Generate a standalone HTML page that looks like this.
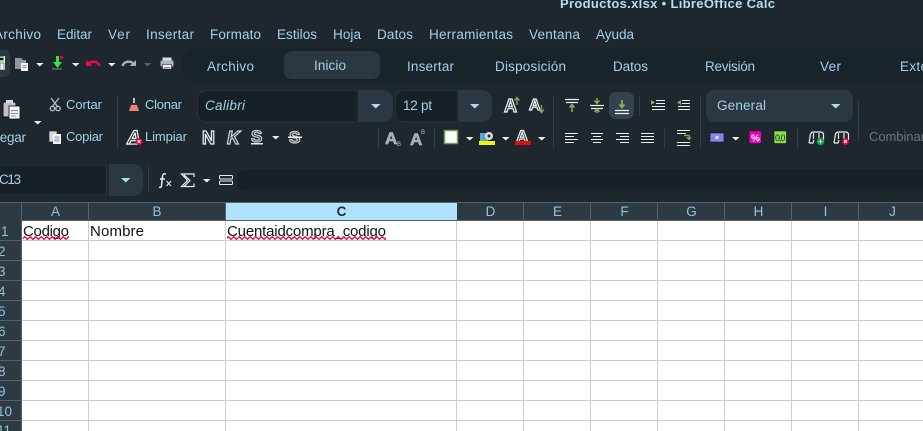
<!DOCTYPE html>
<html><head><meta charset="utf-8">
<style>
html,body{margin:0;padding:0;background:#1e272e;overflow:hidden;width:923px;height:431px}
svg{display:block}
text{font-family:"Liberation Sans",sans-serif;font-size:13.5px;fill:#9fd2ea}
.l{font-size:13px}
.g{font-size:15px;fill:#111}
.h{font-size:13.5px;fill:#8fc3dc;text-anchor:middle}
.r{font-size:13.5px;fill:#8fc3dc}
.o{font-weight:bold;fill:#2a343a;stroke:#f0f0f0;stroke-width:1.200px}
</style></head><body>
<svg width="923" height="431" viewBox="0 0 923 431" xmlns="http://www.w3.org/2000/svg">
<defs>
<path id="t" d="M0 0h7.5l-3.75 3.5z" fill="#f0f0f0"/>
<path id="b" d="M0 0h9.5l-4.75 4.5z" fill="#a8def5"/>
<pattern id="w" x="0" y="235" width="5.500" height="6" patternUnits="userSpaceOnUse"><path d="M-2.750 1.700L0 4.300 2.750 1.700 5.500 4.300 8.250 1.700" fill="none" stroke="#f0003c" stroke-width="1.300"/></pattern>
</defs>
<rect width="923" height="431" fill="#1e272e"/>
<!-- title -->
<text x="560" y="8" textLength="215" lengthAdjust="spacing" font-weight="bold" style="font-size:13px;fill:#b4dff2">Productos.xlsx • LibreOffice Calc</text>
<!-- menu -->
<text x="-6" y="39" textLength="47" lengthAdjust="spacing">Archivo</text>
<text x="57" y="39" textLength="35" lengthAdjust="spacing">Editar</text>
<text x="108" y="39" textLength="22" lengthAdjust="spacing">Ver</text>
<text x="146" y="39" textLength="48" lengthAdjust="spacing">Insertar</text>
<text x="210" y="39" textLength="51" lengthAdjust="spacing">Formato</text>
<text x="277" y="39" textLength="40" lengthAdjust="spacing">Estilos</text>
<text x="333" y="39" textLength="28" lengthAdjust="spacing">Hoja</text>
<text x="377" y="39" textLength="36" lengthAdjust="spacing">Datos</text>
<text x="429" y="39" textLength="84" lengthAdjust="spacing">Herramientas</text>
<text x="529" y="39" textLength="51" lengthAdjust="spacing">Ventana</text>
<text x="596" y="39" textLength="38" lengthAdjust="spacing">Ayuda</text>
<!-- tab strip -->
<rect x="183" y="48" width="760" height="34" rx="10" fill="#19232a"/>
<rect x="284" y="51" width="96" height="28" rx="8" fill="#2b3841"/>
<text x="207" y="71" textLength="47" lengthAdjust="spacing">Archivo</text>
<text x="314" y="70" textLength="32" lengthAdjust="spacing">Inicio</text>
<text x="407" y="71" textLength="47" lengthAdjust="spacing">Insertar</text>
<text x="495" y="71" textLength="71" lengthAdjust="spacing">Disposición</text>
<text x="613" y="71" textLength="35" lengthAdjust="spacing">Datos</text>
<text x="705" y="71" textLength="50" lengthAdjust="spacing">Revisión</text>
<text x="820" y="71" textLength="21" lengthAdjust="spacing">Ver</text>
<text x="900" y="71" textLength="62" lengthAdjust="spacing">Extensión</text>
<!-- quick access -->
<rect x="-10" y="50" width="20" height="27" rx="6" fill="#2b3841"/>
<rect x="-2" y="56" width="7" height="14" fill="#f4f4f4"/><rect x="-1" y="56" width="5" height="1.500" fill="#35b44a"/><rect x="0" y="58" width="3.500" height="2" fill="#111"/><rect x="-1" y="60.500" width="5" height="1" fill="#35b44a"/><rect x="0" y="63" width="4" height="7" fill="#f4f4f4" stroke="#222" stroke-width=".5"/>
<path d="M15 58h6l2 2h3v9H15z" fill="#8f9699"/><rect x="21" y="63" width="7" height="8" fill="#f2f2f2"/><path d="M22.5 65.500h4M22.500 67.500h4" stroke="#8d80e8"/>
<use href="#t" x="36" y="63"/>
<path d="M56 56h3v6h3l-4.500 6-4.500-6h3z" fill="#3ee04a"/><rect x="52" y="68.500" width="10" height="1" fill="#888"/><circle cx="61.500" cy="57.500" r="1.800" fill="#e4003a"/>
<use href="#t" x="72" y="63"/>
<path d="M99.500 66C98 61.500 93 60.500 89 63" fill="none" stroke="#ee0a44" stroke-width="2.400"/><path d="M86 60v6h6.500z" fill="#ee0a44"/>
<use href="#t" x="108" y="63"/>
<path d="M122.500 66C124 61.500 129 60.500 133 63" fill="none" stroke="#aab0b3" stroke-width="2.400"/><path d="M136 60v6h-6.500z" fill="#aab0b3"/>
<path d="M144 63h7.500l-3.750 3.500z" fill="#5d6468"/>
<rect x="162.500" y="57.500" width="9" height="4" fill="#ddd"/><rect x="160.500" y="60.500" width="13" height="6" rx="1" fill="#aeb4b7"/><rect x="162.500" y="64.500" width="9" height="4.500" fill="#f4f4f4" stroke="#111" stroke-width=".5"/><path d="M164 67.500h6" stroke="#7a70e0"/>
<!-- clipboard group -->
<rect x="3" y="102" width="13" height="15" rx="1.500" fill="#bfc3c5" stroke="#111"/><rect x="6" y="100" width="7" height="3" fill="#d8d8d8"/>
<rect x="9" y="106" width="11" height="13" fill="#f6f6f6" stroke="#111" stroke-width=".8"/><path d="M11 110.500h7M11 113.500h7M11 116h5" stroke="#8d80e8"/>
<text x="-9" y="142" textLength="35" lengthAdjust="spacing">Pegar</text>
<use href="#t" x="34" y="121"/>
<g stroke="#b9bdbc" stroke-width="1.300" fill="none"><path d="M51 98l7 9M59 98l-7 9"/><circle cx="52.500" cy="108.500" r="2.200"/><circle cx="58" cy="108.500" r="2.200"/></g>
<text class="l" x="66" y="109" textLength="36" lengthAdjust="spacing">Cortar</text>
<rect x="49" y="131" width="8" height="11" fill="#d5d5d5" stroke="#222" stroke-width=".6"/><rect x="53" y="134" width="8" height="10" fill="#f6f6f6"/><path d="M54.500 137h5M54.500 139h5M54.500 141h5" stroke="#8d80e8"/>
<text class="l" x="66" y="141" textLength="37" lengthAdjust="spacing">Copiar</text>
<rect x="117" y="96" width="1" height="52" fill="#313d45"/>
<rect x="133" y="98" width="2" height="6" fill="#bbb"/><rect x="131" y="103" width="6" height="2" fill="#333"/><path d="M131 105h6l2 6h-10z" fill="#f47d74"/>
<text class="l" x="145" y="109" textLength="37" lengthAdjust="spacing">Clonar</text>
<text x="127" y="144" class="o" font-style="italic" style="font-size:19px" textLength="14">A</text><rect x="127" y="143.500" width="12" height="1.200" fill="#eee"/><circle cx="139" cy="141.500" r="3.500" fill="#e4003a"/><path d="M137.500 140l3 3M140.500 140l-3 3" stroke="#fff"/>
<text class="l" x="145" y="141" textLength="42" lengthAdjust="spacing">Limpiar</text>
<!-- bold etc -->
<text x="202" y="144" class="o" style="font-size:18px" textLength="14">N</text>
<text x="227" y="144" class="o" font-style="italic" style="font-size:18px;stroke:#d0d0d0" textLength="14">K</text>
<text x="251" y="142" class="o" style="font-size:17px;stroke:#d0d0d0" textLength="12">S</text>
<rect x="251" y="143" width="12" height="1.500" fill="#eee"/>
<use href="#t" x="272" y="136"/>
<text x="289" y="143" class="o" style="font-size:17px;stroke:#d0d0d0" textLength="12">S</text>
<rect x="288" y="136.500" width="14" height="1.500" fill="#eee"/>
<!-- font box -->
<rect x="197.500" y="90.500" width="170" height="31.500" rx="8" fill="#172025" stroke="#28343b"/>
<path d="M358 90h25a10 10 0 0 1 10 10v12a10 10 0 0 1-10 10h-25z" fill="#2b3841"/>
<rect x="356.500" y="90" width="1.500" height="32" fill="#1e272e"/>
<use href="#b" x="371" y="104"/>
<text x="205" y="110" font-style="italic" textLength="40" lengthAdjust="spacing">Calibri</text>
<rect x="395.500" y="90.500" width="70" height="31.500" rx="8" fill="#172025" stroke="#28343b"/>
<path d="M458 90h24a10 10 0 0 1 10 10v12a10 10 0 0 1-10 10h-24z" fill="#2b3841"/>
<rect x="456" y="90" width="2" height="32" fill="#1e272e"/>
<use href="#b" x="470" y="104"/>
<text x="403" y="110" textLength="29" lengthAdjust="spacing">12 pt</text>
<!-- grow/shrink -->
<text x="504" y="112" class="o" style="font-size:18px" textLength="13">A</text>
<path d="M517 105v-7M514.500 100.500l2.500-3 2.500 3" stroke="#7fb05a" stroke-width="1.300" fill="none"/>
<text x="529" y="110" class="o" style="font-size:16px" textLength="11">A</text>
<path d="M541.500 105v7M539 109.500l2.500 3 2.500-3" stroke="#7fb05a" stroke-width="1.300" fill="none"/>
<rect x="553" y="96" width="1" height="52" fill="#313d45"/>
<!-- valign -->
<path d="M565 99.500h14M566 102.500h12" stroke="#eee" stroke-width="1.200"/><path d="M572 112v-7M569.500 107.500l2.500-3 2.500 3" stroke="#7fb05a" stroke-width="1.600" fill="none"/>
<path d="M590 105.500h14M591 108.500h12" stroke="#eee" stroke-width="1.200"/><path d="M597 98v5M594.500 100.500l2.500 3 2.500-3M597 113v-3M594.500 112l2.500-3 2.500 3" stroke="#7fb05a" stroke-width="1.400" fill="none"/>
<rect x="609" y="92" width="25" height="27" rx="7" fill="#33434c"/>
<path d="M615 110.500h14M615 113.500h14" stroke="#eee" stroke-width="1.200"/><path d="M622 100v7M619.500 104.500l2.500 3 2.500-3" stroke="#7fb05a" stroke-width="1.800" fill="none"/>
<rect x="639" y="96" width="1" height="20" fill="#313d45"/>
<path d="M651 100l4 2.500-4 2.500z" fill="#7fb05a"/><path d="M656 100.500h9M656 103.500h9M652 106.500h13M652 109.500h13" stroke="#eee"/>
<path d="M681 100l-4 2.500 4 2.500z" fill="#7fb05a"/><path d="M682 100.500h8M682 103.500h8M678 106.500h12M678 109.500h12" stroke="#eee"/>
<rect x="700" y="96" width="1" height="52" fill="#313d45"/>
<rect x="706" y="90" width="147" height="32" rx="8" fill="#2b3841"/>
<text x="717" y="110" textLength="49" lengthAdjust="spacing">General</text>
<use href="#b" x="831" y="104"/>
<rect x="858" y="101" width="1" height="41" fill="#313d45"/>
<!-- row 2 -->
<rect x="378" y="128" width="1" height="20" fill="#313d45"/>
<text x="385" y="144" font-weight="bold" style="font-size:17px;fill:#aaa;stroke:#bbb;stroke-width:.6px" textLength="12">A</text>
<text x="397" y="146" style="font-size:6px;fill:#bbb">B</text>
<text x="410" y="145" font-weight="bold" style="font-size:17px;fill:#aaa;stroke:#bbb;stroke-width:.6px" textLength="12">A</text>
<text x="421" y="134" style="font-size:6px;fill:#bbb">B</text>
<rect x="434" y="128" width="1" height="20" fill="#313d45"/>
<rect x="444.500" y="130.500" width="13" height="13" fill="#fff" stroke="#6fa050" stroke-width="1.500"/>
<use href="#t" x="466" y="137"/>
<rect x="480" y="133" width="8" height="8" fill="#5ea6c8"/><circle cx="489" cy="136" r="4" fill="#ddd"/><circle cx="489" cy="136" r="1.500" fill="#222"/>
<rect x="479" y="141" width="16" height="4" fill="#f2f20a"/>
<use href="#t" x="502" y="137"/>
<text x="516" y="142" class="o" style="font-size:17px" textLength="14">A</text>
<rect x="515" y="141" width="16" height="4" fill="#e30a0a"/>
<use href="#t" x="538" y="137"/>
<path d="M565 133.500h13M565 136.500h9M565 139.500h13M565 142.500h9" stroke="#eee"/>
<path d="M591 133.500h12M593 136.500h8M591 139.500h12M593 142.500h8" stroke="#eee"/>
<path d="M616 133.500h13M620 136.500h9M616 139.500h13M620 142.500h9" stroke="#eee"/>
<path d="M641 133.500h13M641 136.500h13M641 139.500h13M641 142.500h13" stroke="#eee"/>
<rect x="664" y="128" width="1" height="20" fill="#313d45"/>
<path d="M677 130.500h13M677 133.500h9M677 142.500h13M677 145.500h13" stroke="#eee"/>
<path d="M684 135.500h5v3M686.500 137l2.500 2.500 2-2.500" stroke="#7fb05a" fill="none" stroke-width="1.200"/>
<rect x="710" y="133" width="14" height="9" rx="1" fill="#8484ee" stroke="#111" stroke-width=".6"/><circle cx="717" cy="137.500" r="1.700" fill="#dcdcff"/>
<use href="#t" x="732" y="137"/>
<rect x="749" y="131" width="12.500" height="12.500" rx="1" fill="#ef00c0" stroke="#111" stroke-width=".6"/>
<text x="751" y="141.500" font-weight="bold" style="font-size:10px;fill:#fff">%</text>
<rect x="774" y="131" width="12.500" height="12.500" rx="1" fill="#86e04a" stroke="#111" stroke-width=".6"/>
<text x="775" y="141" style="font-size:9px;fill:#222" textLength="10.500">0,0</text>
<rect x="797" y="128" width="1" height="20" fill="#313d45"/>
<g fill="none" stroke="#eee" stroke-width="1.200">
<path d="M809 143l1.500-9q1-2 3-2h7q3 0 3 3v5M813.500 133v6M819 133v6M809 143h4l1-3"/>
<path d="M834 143l1.500-9q1-2 3-2h7q3 0 3 3v5M838.500 133v6M844 133v6M834 143h4l1-3"/>
</g>
<circle cx="820.500" cy="141.500" r="3.800" fill="#06a83c"/><path d="M818.500 141.500h4M820.500 139.500v4" stroke="#fff"/>
<circle cx="845.500" cy="141.500" r="3.500" fill="#e4003a"/><path d="M844 140l3 3M847 140l-3 3" stroke="#fff"/>
<text class="l" x="869" y="141" textLength="56" lengthAdjust="spacing" style="fill:#6e7578">Combinar</text>
<!-- formula bar -->
<rect x="-10" y="165" width="116.500" height="30" fill="#172025" stroke="#263238"/>
<text x="-1" y="184" textLength="22" lengthAdjust="spacing">C13</text>
<path d="M109 164h24a10 10 0 0 1 10 10v12a10 10 0 0 1-10 10h-24z" fill="#2b3841"/>
<use href="#b" x="121" y="178"/>
<rect x="148" y="166" width="1" height="26" fill="#313d45"/>
<path d="M166 174q-3-1-3.500 2l-1 10q-.5 2-2.500 1M160 179h5" fill="none" stroke="#eee" stroke-width="1.500"/>
<path d="M166.500 181l4.500 5M171 181l-4.500 5" stroke="#ddd" stroke-width="1.200"/>
<path d="M194 177v-3h-12.500l6 6.500-6 6h12.500v-3M184 175l6 5.500-6 6" fill="none" stroke="#eee" stroke-width="1.200"/>
<use href="#t" x="203" y="179"/>
<rect x="219.500" y="175.500" width="13" height="3.500" rx="1" fill="none" stroke="#eee"/><rect x="219.500" y="181" width="13" height="3.500" rx="1" fill="none" stroke="#eee"/>
<rect x="238" y="170" width="700" height="21" rx="6" fill="#172025"/>
<!-- sheet -->
<rect x="0" y="202" width="923" height="229" fill="#fff"/>
<rect x="0" y="202" width="22" height="229" fill="#2e3a43"/>
<rect x="0" y="202" width="923" height="19" fill="#2e3a43"/>
<rect x="226" y="203" width="231" height="17" fill="#b0e3fb"/>
<rect x="0" y="202" width="923" height="1" fill="#566169"/>
<rect x="22" y="220" width="901" height="1" fill="#566169"/>
<rect x="21" y="202" width="1" height="229" fill="#566169"/>
<g fill="#566169">
<rect x="88" y="203" width="1" height="17"/><rect x="225" y="203" width="1" height="17"/><rect x="523" y="203" width="1" height="17"/><rect x="590" y="203" width="1" height="17"/><rect x="657" y="203" width="1" height="17"/><rect x="724" y="203" width="1" height="17"/><rect x="791" y="203" width="1" height="17"/><rect x="858" y="203" width="1" height="17"/>
</g>
<g fill="#cccccc">
<rect x="88" y="221" width="1" height="210"/><rect x="225" y="221" width="1" height="210"/><rect x="456" y="221" width="1" height="210"/><rect x="523" y="221" width="1" height="210"/><rect x="590" y="221" width="1" height="210"/><rect x="657" y="221" width="1" height="210"/><rect x="724" y="221" width="1" height="210"/><rect x="791" y="221" width="1" height="210"/><rect x="858" y="221" width="1" height="210"/>
<rect x="22" y="240" width="901" height="1"/><rect x="22" y="260" width="901" height="1"/><rect x="22" y="280" width="901" height="1"/><rect x="22" y="300" width="901" height="1"/><rect x="22" y="320" width="901" height="1"/><rect x="22" y="340" width="901" height="1"/><rect x="22" y="360" width="901" height="1"/><rect x="22" y="380" width="901" height="1"/><rect x="22" y="400" width="901" height="1"/><rect x="22" y="420" width="901" height="1"/>
</g>
<g fill="#566169"><rect x="0" y="240" width="21" height="1"/><rect x="0" y="260" width="21" height="1"/><rect x="0" y="280" width="21" height="1"/><rect x="0" y="300" width="21" height="1"/><rect x="0" y="320" width="21" height="1"/><rect x="0" y="340" width="21" height="1"/><rect x="0" y="360" width="21" height="1"/><rect x="0" y="380" width="21" height="1"/><rect x="0" y="400" width="21" height="1"/><rect x="0" y="420" width="21" height="1"/></g>
<text class="h" x="55.500" y="216">A</text><text class="h" x="157" y="216">B</text>
<text x="341.500" y="216" font-weight="bold" style="fill:#1e2a32;text-anchor:middle">C</text>
<text class="h" x="490.500" y="216">D</text><text class="h" x="557.500" y="216">E</text><text class="h" x="624.500" y="216">F</text><text class="h" x="691.500" y="216">G</text><text class="h" x="758.500" y="216">H</text><text class="h" x="825.500" y="216">I</text><text class="h" x="892.500" y="216">J</text>
<text class="r" x="1" y="236">1</text><text class="r" x="-2" y="256">2</text><text class="r" x="-2" y="276">3</text><text class="r" x="-2" y="296">4</text><text class="r" x="-2" y="316">5</text><text class="r" x="-2" y="336">6</text><text class="r" x="-2" y="356">7</text><text class="r" x="-2" y="376">8</text><text class="r" x="-2" y="396">9</text><text class="r" x="-3" y="416">10</text><text class="r" x="-3" y="435">11</text>
<text class="g" x="23" y="236" textLength="46" lengthAdjust="spacing">Codigo</text>
<text class="g" x="90" y="236" textLength="54" lengthAdjust="spacing">Nombre</text>
<text class="g" x="227" y="236" textLength="159" lengthAdjust="spacing">Cuentaidcompra_codigo</text>
<rect x="23" y="235" width="46" height="5" fill="url(#w)"/>
<rect x="227" y="235" width="159" height="5" fill="url(#w)"/>
</svg>
</body></html>
